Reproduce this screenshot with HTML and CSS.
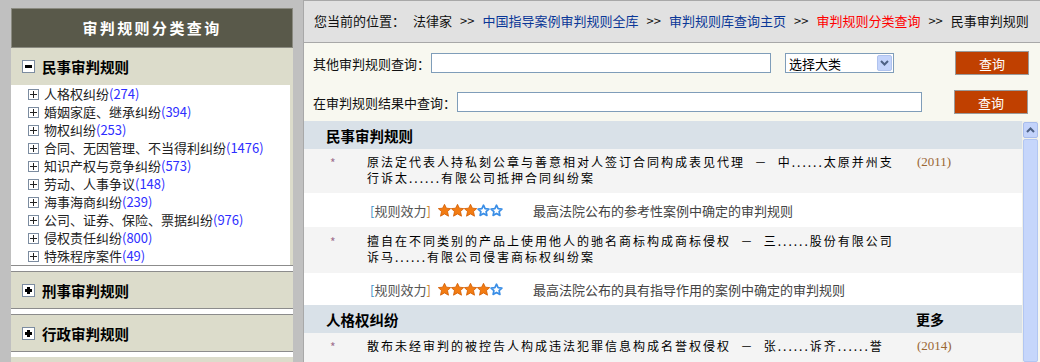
FILE: index.html
```html
<!DOCTYPE html>
<html lang="zh-CN">

<head>
	<meta charset="utf-8">
	<title>审判规则分类查询</title>
	<link rel="stylesheet" href="styles.css">
</head>

<body>
	<div class="page">

		<!-- venstre: kategorier -->
		<div class="side">
			<div class="side-title">审判规则分类查询</div>

			<div class="side-head open"><span class="tog minus"></span>民事审判规则</div>
			<ul class="side-list">
				<li><span class="tog-s"></span>人格权纠纷<span class="num">(274)</span></li>
				<li><span class="tog-s"></span>婚姻家庭、继承纠纷<span class="num">(394)</span></li>
				<li><span class="tog-s"></span>物权纠纷<span class="num">(253)</span></li>
				<li><span class="tog-s"></span>合同、无因管理、不当得利纠纷<span class="num">(1476)</span></li>
				<li><span class="tog-s"></span>知识产权与竞争纠纷<span class="num">(573)</span></li>
				<li><span class="tog-s"></span>劳动、人事争议<span class="num">(148)</span></li>
				<li><span class="tog-s"></span>海事海商纠纷<span class="num">(239)</span></li>
				<li><span class="tog-s"></span>公司、证券、保险、票据纠纷<span class="num">(976)</span></li>
				<li><span class="tog-s"></span>侵权责任纠纷<span class="num">(800)</span></li>
				<li><span class="tog-s"></span>特殊程序案件<span class="num">(49)</span></li>
			</ul>

			<div class="side-gap"></div>
			<div class="side-head"><span class="tog plus"></span>刑事审判规则</div>
			<div class="side-gap"></div>
			<div class="side-head"><span class="tog plus"></span>行政审判规则</div>
			<div class="side-gap"></div>
		</div>

		<!-- højre: indhold -->
		<div class="main">
			<div class="crumbs">
				<span>您当前的位置：</span>
				<span>法律家</span>
				<span>&gt;&gt;</span>
				<a class="blue">中国指导案例审判规则全库</a>
				<span>&gt;&gt;</span>
				<a class="blue">审判规则库查询主页</a>
				<span>&gt;&gt;</span>
				<a class="red">审判规则分类查询</a>
				<span>&gt;&gt;</span>
				<span>民事审判规则</span>
			</div>

			<div class="search">
				<div class="search-row">
					<label class="lbl1">其他审判规则查询：</label>
					<input class="inp1" type="text">
					<div class="sel">选择大类<span class="sel-btn"><svg width="9" height="6" viewBox="0 0 9 6"><path d="M1 1 L4.5 4.5 L8 1" fill="none" stroke="#4d6185" stroke-width="2"/></svg></span></div>
					<button class="btn btn1">查询</button>
				</div>
				<div class="search-row">
					<label class="lbl2">在审判规则结果中查询：</label>
					<input class="inp2" type="text">
					<button class="btn btn2">查询</button>
				</div>
			</div>

			<div class="results">
				<div class="list">
					<div class="cat"><span>民事审判规则</span></div>

					<div class="item">
						<span class="ast">*</span>
						<div class="title">原法定代表人持私刻公章与善意相对人签订合同构成表见代理&nbsp;&nbsp;－&nbsp;&nbsp;中......太原并州支<br>行诉太......有限公司抵押合同纠纷案</div>
						<span class="year">(2011)</span>
					</div>
					<div class="power">
						<span class="tag"><b class="bl">[</b>规则效力<b class="or">]</b></span>
						<span class="stars" data-n="3"></span>
						<span class="desc">最高法院公布的参考性案例中确定的审判规则</span>
					</div>

					<div class="item tall">
						<span class="ast">*</span>
						<div class="title">擅自在不同类别的产品上使用他人的驰名商标构成商标侵权&nbsp;&nbsp;－&nbsp;&nbsp;三......股份有限公司<br>诉马......有限公司侵害商标权纠纷案</div>
						<span class="year"></span>
					</div>
					<div class="power short">
						<span class="tag"><b class="bl">[</b>规则效力<b class="or">]</b></span>
						<span class="stars" data-n="4"></span>
						<span class="desc">最高法院公布的具有指导作用的案例中确定的审判规则</span>
					</div>

					<div class="cat"><span>人格权纠纷</span><span class="more">更多</span></div>

					<div class="item">
						<span class="ast">*</span>
						<div class="title">散布未经审判的被控告人构成违法犯罪信息构成名誉权侵权&nbsp;&nbsp;－&nbsp;&nbsp;张......诉齐......誉</div>
						<span class="year">(2014)</span>
					</div>
				</div>

				<div class="scroll">
					<div class="scroll-up"><svg width="9" height="6" viewBox="0 0 9 6"><path d="M1 5 L4.5 1.5 L8 5" fill="none" stroke="#4d6185" stroke-width="2"/></svg></div>
					<div class="scroll-thumb"></div>
				</div>
			</div>
		</div>
	</div>

	<script>
		//		tegn stjerner ud fra data-n
		const fuld = '<svg width="13" height="13" viewBox="0 0 13 13"><path d="M6.5 0.3 L8.4 4.2 L12.7 4.6 L9.5 7.5 L10.5 12.2 L6.5 9.9 L2.5 12.2 L3.5 7.5 L0.3 4.6 L4.6 4.2 Z" fill="#f37c12" stroke="#d05c00" stroke-width="0.8"/></svg>';
		const tom = '<svg width="13" height="13" viewBox="0 0 13 13"><path d="M6.5 1.2 L8.1 4.7 L11.9 5.1 L9.1 7.6 L9.9 11.4 L6.5 9.4 L3.1 11.4 L3.9 7.6 L1.1 5.1 L4.9 4.7 Z" fill="#fff" stroke="#3a8ee6" stroke-width="1.7" stroke-linejoin="round"/></svg>';

		document.querySelectorAll(".stars").forEach(function (el) {
			let n = parseInt(el.dataset.n);
			let html = "";
			for (let i = 0; i < 5; i++) {
				html += i < n ? fuld : tom;
			}
			el.innerHTML = html;
		});
	</script>
</body>

</html>
```

FILE: styles.css
```css
* {
	box-sizing: border-box;
}

body {
	margin: 0;
	background: #c0c0c0;
	font-family: "Noto Sans CJK SC", "Noto Sans", sans-serif;
	font-size: 13px;
	color: #222;
}

.page {
	display: flex;
	height: 362px;
	overflow: hidden;
}

/*		venstre kolonne */

.side {
	width: 282px;
	margin: 8px 10px 0 11px;
	background: #dcdccb;
	display: flex;
	flex-direction: column;
}

.side-title {
	height: 40px;
	background: #59594a;
	border: 1px solid #8a8a80;
	color: #fff;
	font-weight: bold;
	font-size: 15px;
	letter-spacing: 2.4px;
	text-align: center;
	line-height: 38px;
}

.side-head {
	height: 38px;
	border-top: 1px solid #8c8c8c;
	border-bottom: 1px solid #8c8c8c;
	display: flex;
	align-items: center;
	padding-left: 11px;
	font-size: 14.5px;
	font-weight: bold;
	color: #000;
}

.side-head.open {
	height: 37px;
	border: none;
}

.tog {
	width: 13px;
	height: 13px;
	border: 1px solid #7c8ca0;
	background: #fff;
	margin-right: 7px;
	position: relative;
}

.tog::before {
	content: "";
	position: absolute;
	left: 2px;
	top: 4px;
	width: 7px;
	height: 3px;
	background: #000;
}

.tog.plus::after {
	content: "";
	position: absolute;
	left: 4px;
	top: 2px;
	width: 3px;
	height: 7px;
	background: #000;
}

.side-list {
	list-style: none;
	margin: 0;
	padding: 0 0 0 17px;
	background: #fff;
	line-height: 18px;
	border-bottom: 1px solid #8c8c8c;
	box-shadow: inset -3px 0 0 #dcdccb;
}

.side-list li {
	display: flex;
	align-items: center;
	height: 18px;
	white-space: nowrap;
}

.tog-s {
	width: 11px;
	height: 11px;
	border: 1px solid #7c8ca0;
	margin-right: 5px;
	position: relative;
	background: #fff;
}

.tog-s::before {
	content: "";
	position: absolute;
	left: 1px;
	top: 4px;
	width: 7px;
	height: 1px;
	background: #222;
}

.tog-s::after {
	content: "";
	position: absolute;
	left: 4px;
	top: 1px;
	width: 1px;
	height: 7px;
	background: #222;
}

.num {
	color: #2e2eff;
}

.side-gap {
	height: 5px;
	background: #fff;
	flex: none;
}

/*		højre kolonne */

.main {
	width: 737px;
	border-left: 1px solid #a8a8a8;
	border-top: 1px solid #a8a8a8;
	background: #f8f8f0;
	display: flex;
	flex-direction: column;
}

.crumbs {
	height: 47px;
	background: #e1e1e1;
	border-bottom: 1px solid #a8a8a8;
	display: flex;
	align-items: center;
	gap: 8px;
	padding: 0 0 2px 10px;
	white-space: nowrap;
	color: #111;
}

.crumbs .blue {
	color: #0a3797;
}

.crumbs .red {
	color: #ff0000;
}

.search {
	height: 78px;
	flex: none;
	padding: 8px 0 0 9px;
	display: flex;
	flex-direction: column;
	gap: 15px;
}

.search-row {
	display: flex;
	align-items: center;
	height: 24px;
}

.search label {
	color: #111;
	white-space: nowrap;
}

.lbl1 {
	width: 118px;
}

.lbl2 {
	width: 144px;
}

input[type=text] {
	height: 20px;
	border: 1px solid #7f9db9;
	background: #fff;
	margin: 0;
	padding: 0 3px;
}

.inp1 {
	width: 340px;
}

.inp2 {
	width: 465px;
}

.sel {
	width: 109px;
	height: 20px;
	margin-left: 14px;
	border: 1px solid #7f9db9;
	background: #fff;
	display: flex;
	align-items: center;
	justify-content: space-between;
	padding: 0 1px 0 3px;
	color: #000;
}

.sel-btn {
	width: 15px;
	height: 16px;
	background: #c4d4fb;
	border: 1px solid #b0c3ee;
	border-radius: 2px;
	display: flex;
	align-items: center;
	justify-content: center;
}

.btn {
	width: 74px;
	height: 24px;
	background: #c04000;
	border: 1px solid #9a9a9a;
	color: #fff;
	font-family: inherit;
	font-size: 13px;
	padding: 0;
}

.btn1 {
	margin-left: 61px;
}

.btn2 {
	margin-left: 32px;
}

/*		resultater */

.results {
	flex: 1;
	display: flex;
	padding-right: 2px;
}

.list {
	width: 718px;
	background: #fff;
}

.cat {
	height: 28px;
	background: #d9e1e8;
	display: flex;
	align-items: center;
	justify-content: space-between;
	padding: 0 78px 0 22px;
	font-size: 14.5px;
	font-weight: bold;
	color: #000;
}

.more {
	font-size: 14px;
}

.item {
	background: #f4f4f4;
	display: grid;
	grid-template-columns: 63px 550px 1fr;
	padding: 5px 0 7px;
	line-height: 16px;
}

.item.tall {
	padding: 6px 0 8px;
}

.ast {
	padding-left: 26px;
	color: #a07090;
	font-size: 12px;
	padding-top: 1px;
}

.title {
	font-size: 12px;
	letter-spacing: 2px;
	color: #000;
	white-space: nowrap;
}

.year {
	font-family: "Liberation Serif", serif;
	font-size: 13px;
	color: #996633;
}

.power {
	height: 34px;
	display: flex;
	align-items: center;
	padding-left: 66px;
	color: #444;
}

.power.short {
	height: 32px;
}

.tag {
	color: #555;
	width: 68px;
}

.tag b {
	font-weight: normal;
}

.tag .bl {
	color: #3a8ec8;
}

.tag .or {
	color: #c87a20;
}

.stars {
	display: flex;
	width: 95px;
}

.stars svg {
	display: block;
}

.desc {
	color: #444;
}

.scroll {
	width: 16px;
	background: #f0f0ea;
	display: flex;
	flex-direction: column;
	padding: 1px 0 0 1px;
}

.scroll-up {
	height: 16px;
	background: #c3d3fb;
	border: 1px solid #a9bdec;
	border-radius: 2px;
	display: flex;
	align-items: center;
	justify-content: center;
}

.scroll-thumb {
	flex: 1;
	margin-top: 1px;
	background: #c6d6fb;
	border: 1px solid #b2c6f2;
	border-radius: 2px;
}
```
